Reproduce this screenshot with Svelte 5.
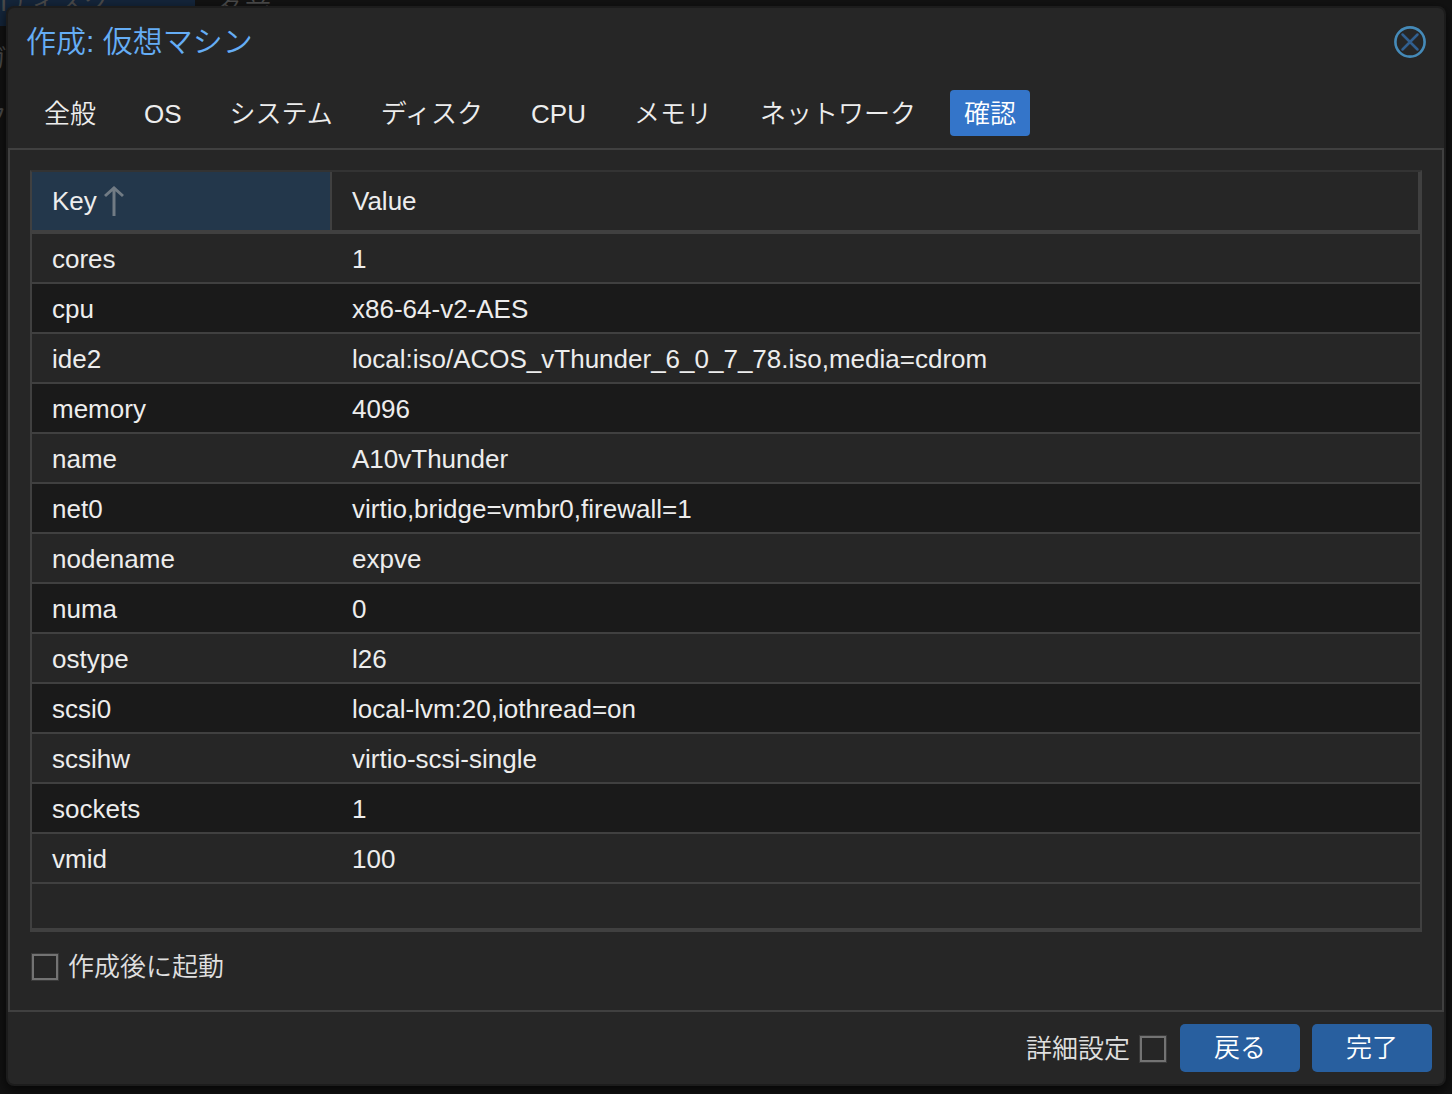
<script lang="ts">
  const tabs = ['全般', 'OS', 'システム', 'ディスク', 'CPU', 'メモリ', 'ネットワーク', '確認'];
  let active = $state('確認');
  let startAfter = $state(false);
  let advanced = $state(false);

  const rows = [
    { key: 'cores', value: '1' },
    { key: 'cpu', value: 'x86-64-v2-AES' },
    { key: 'ide2', value: 'local:iso/ACOS_vThunder_6_0_7_78.iso,media=cdrom' },
    { key: 'memory', value: '4096' },
    { key: 'name', value: 'A10vThunder' },
    { key: 'net0', value: 'virtio,bridge=vmbr0,firewall=1' },
    { key: 'nodename', value: 'expve' },
    { key: 'numa', value: '0' },
    { key: 'ostype', value: 'l26' },
    { key: 'scsi0', value: 'local-lvm:20,iothread=on' },
    { key: 'scsihw', value: 'virtio-scsi-single' },
    { key: 'sockets', value: '1' },
    { key: 'vmid', value: '100' }
  ];
</script>

<div class="screen">
  <!-- page behind the dialog, only its edges show -->
  <div class="backdrop" aria-hidden="true">
    <div class="back-head">
      <span class="back-cell sorted">Iディスク</span>
      <span class="back-cell">名前</span>
    </div>
    <div class="back-side">
      <span>ガ</span>
      <span>ク</span>
    </div>
  </div>

  <div class="dialog" role="dialog" aria-labelledby="dialog-title">
    <header>
      <h1 id="dialog-title">作成: 仮想マシン</h1>
      <button class="close" aria-label="閉じる">
        <svg viewBox="0 0 32 32" width="32" height="32" fill="none">
          <circle cx="16" cy="16" r="14.6" stroke="#458ab8" stroke-width="2.6" />
          <path d="M8.5 8.5L23.5 23.5M23.5 8.5L8.5 23.5" stroke="#315f8f" stroke-width="2.5" stroke-linecap="round" />
        </svg>
      </button>
    </header>

    <nav class="tabs">
      {#each tabs as tab}
        <button class="tab" class:active={tab === active} onclick={() => (active = tab)}>{tab}</button>
      {/each}
    </nav>

    <div class="body">
      <div class="grid">
        <table>
          <thead>
            <tr>
              <th class="key" aria-sort="ascending">
                <span class="sort">
                  Key
                  <svg viewBox="0 0 20 30" width="20" height="30" fill="none" stroke="#717b84" stroke-width="3">
                    <path d="M10 1V30M1 10L10 2L19 10" />
                  </svg>
                </span>
              </th>
              <th>Value</th>
            </tr>
          </thead>
          <tbody>
            {#each rows as row}
              <tr>
                <td>{row.key}</td>
                <td>{row.value}</td>
              </tr>
            {/each}
          </tbody>
        </table>
      </div>
      <label class="check">
        <input type="checkbox" bind:checked={startAfter} />
        作成後に起動
      </label>
    </div>

    <footer>
      <label class="check">
        詳細設定
        <input type="checkbox" bind:checked={advanced} />
      </label>
      <button class="action">戻る</button>
      <button class="action">完了</button>
    </footer>
  </div>
</div>

<style>
  :global(body) {
    background: #121212;
  }

  .screen {
    position: relative;
    box-sizing: border-box;
    min-height: 100vh;
    padding: 8px 8px 10px;
    display: flex;
    font-family: 'Liberation Sans', 'Noto Sans CJK JP', sans-serif;
    font-size: 26px;
    font-weight: 350;
    line-height: 34px;
    color: #ededed;
  }

  .backdrop {
    position: absolute;
    inset: 0;
    overflow: hidden;
    color: #4a4a4a;
  }

  .back-head {
    display: flex;
    height: 26px;
    line-height: 22px;
  }

  .back-cell {
    padding: 0 24px;
  }

  .back-cell.sorted {
    width: 195px;
    box-sizing: border-box;
    padding: 0;
    line-height: 4px;
    background: #14253a;
  }

  .back-side {
    display: flex;
    flex-direction: column;
    align-items: flex-end;
    gap: 24px;
    width: 7px;
    padding-top: 16px;
  }

  .dialog {
    position: relative;
    flex: 1;
    display: flex;
    flex-direction: column;
    background: #262626;
    border-radius: 6px;
    box-shadow: 0 0 0 2px #1c1c1c, 0 4px 12px 2px rgba(0, 0, 0, 0.7);
  }

  header {
    display: flex;
    align-items: center;
    justify-content: space-between;
    padding: 14px 18px 0;
  }

  h1 {
    margin: 0;
    font-size: 30px;
    font-weight: 350;
    line-height: 40px;
    color: #65adf5;
  }

  button {
    font: inherit;
    color: inherit;
    border: 0;
    cursor: pointer;
  }

  .close {
    display: flex;
    padding: 0;
    background: none;
  }

  .tabs {
    display: flex;
    gap: 20px;
    padding: 28px 22px 12px;
  }

  .tab {
    height: 46px;
    padding: 2px 14px 0;
    border-radius: 4px;
    background: none;
    white-space: nowrap;
  }

  .tab.active {
    background: #3475c9;
    color: #ffffff;
  }

  .body {
    flex: 1;
    display: flex;
    flex-direction: column;
    padding: 20px;
    border: 2px solid #404040;
  }

  .grid {
    flex: 1;
    border: 2px solid #404040;
    border-top-color: #333333;
    border-bottom-width: 4px;
  }

  table {
    width: 100%;
    border-collapse: separate;
    border-spacing: 0;
    table-layout: fixed;
  }

  th,
  td {
    box-sizing: border-box;
    padding: 0 20px;
    text-align: left;
    font-weight: 350;
  }

  th {
    height: 62px;
    border-right: 2px solid #404040;
    border-bottom: 4px solid #404040;
  }

  .key {
    width: 300px;
    background: #23374b;
  }

  .sort {
    display: flex;
    align-items: center;
    gap: 7px;
  }

  td {
    height: 50px;
    padding-top: 2px;
    border-bottom: 2px solid #404040;
  }

  tbody tr:nth-child(even) {
    background: #1a1a1a;
  }

  .check {
    display: flex;
    align-items: center;
    gap: 10px;
    color: #e0e0e0;
  }

  .body .check {
    padding: 18px 0 6px 2px;
  }

  input {
    appearance: none;
    width: 26px;
    height: 26px;
    margin: 0;
    border: 2px solid #737373;
    box-shadow: 0 0 0 1px #3a3a3a;
  }

  input:checked {
    background: #3475c9;
  }

  footer {
    display: flex;
    align-items: center;
    justify-content: flex-end;
    gap: 12px;
    padding: 12px;
  }

  footer .check {
    padding: 2px 2px 0 0;
  }

  .action {
    min-width: 120px;
    height: 48px;
    border-radius: 5px;
    background: #285f9f;
    color: #ffffff;
  }
</style>
